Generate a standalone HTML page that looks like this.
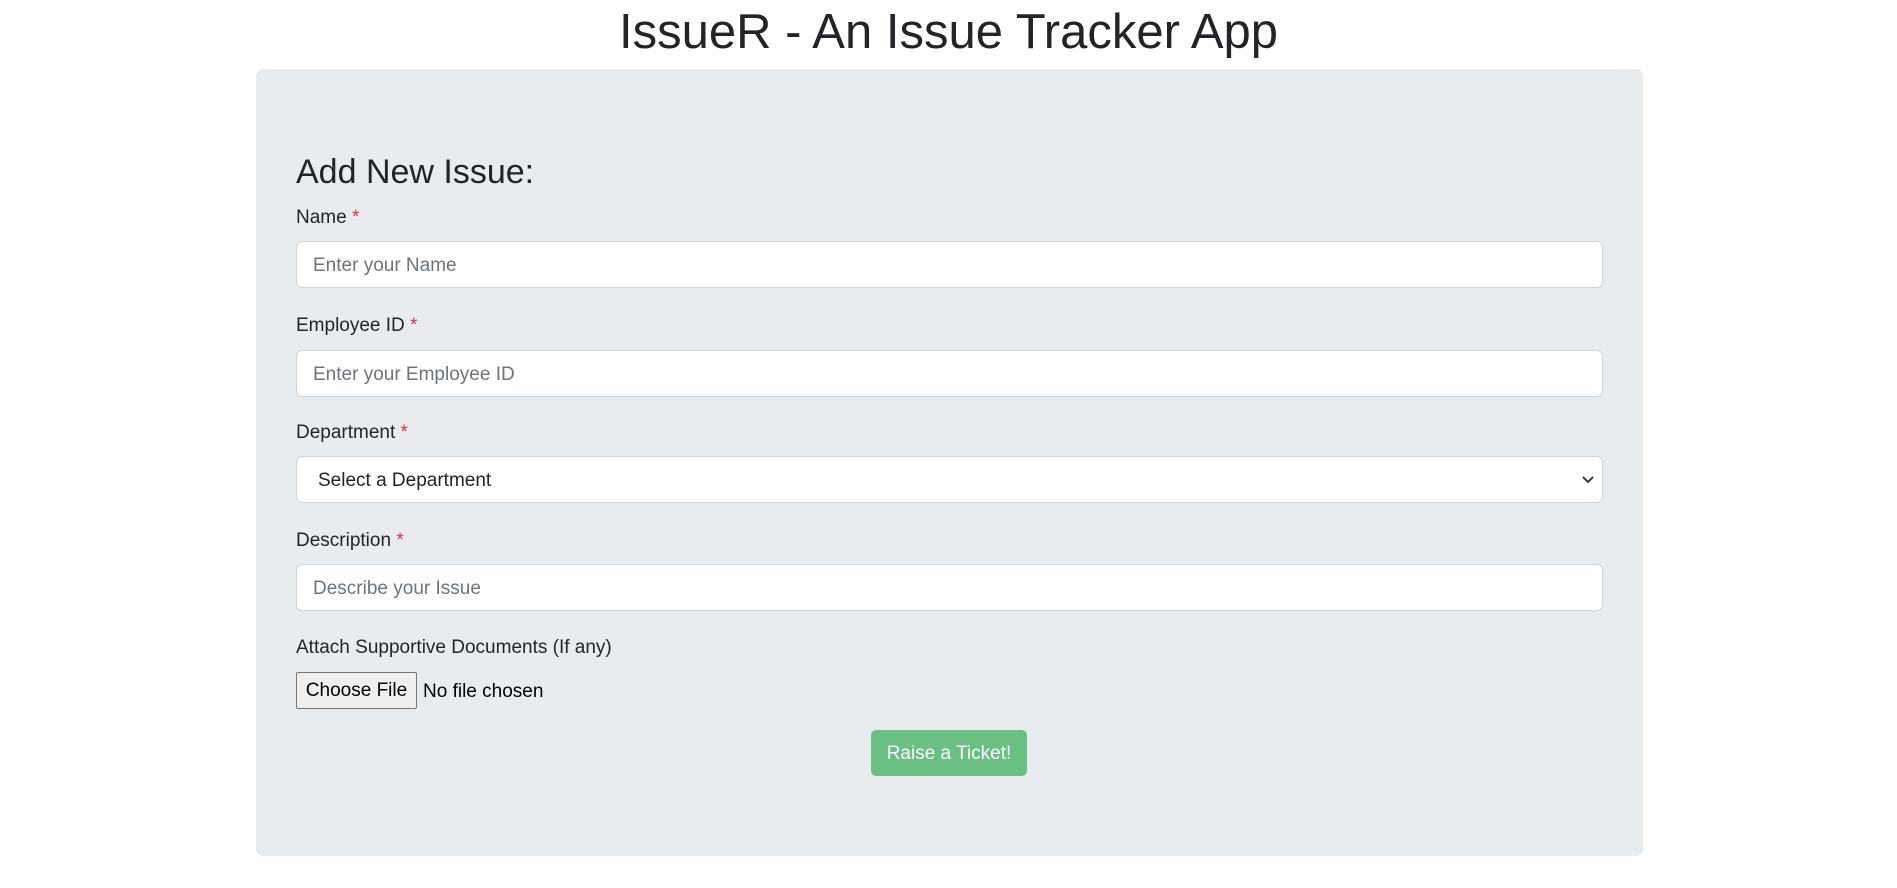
<!DOCTYPE html>
<html><head><meta charset="utf-8"><style>
*{box-sizing:border-box;margin:0;padding:0}
body{width:1897px;height:888px;background:#fff;font-family:"Liberation Sans",sans-serif;color:#212529;position:relative;overflow:hidden}
.a{position:absolute;white-space:nowrap}
h1{position:absolute;left:0;width:1897px;text-align:center;top:1px;font-size:49px;font-weight:500;line-height:62px}
.box{position:absolute;left:256px;top:69px;width:1387px;height:787px;background:#e9ecef;border-radius:7px}
.lbl{font-size:19px;line-height:24px}
.req{color:#dc3545}
.inp{position:absolute;left:296px;width:1307px;height:47px;background:#fff;border:1px solid #ced4da;border-radius:6px;font-size:19px;color:#6c757d;padding-left:16px;line-height:48px}
</style></head><body>
<h1>IssueR - An Issue Tracker App</h1>
<div class="box"></div>
<div class="a" style="left:296px;top:150px;font-size:34px;font-weight:500;line-height:44px">Add New Issue:</div>
<div class="a lbl" style="left:296px;top:206px">Name <span class="req">*</span></div>
<div class="inp" style="top:241px">Enter your Name</div>
<div class="a lbl" style="left:296px;top:314px">Employee ID <span class="req">*</span></div>
<div class="inp" style="top:350px">Enter your Employee ID</div>
<div class="a lbl" style="left:296px;top:421px">Department <span class="req">*</span></div>
<div class="inp" style="top:456px;color:#212529;padding-left:21px">Select a Department
<svg style="position:absolute;right:7px;top:17px" width="14" height="12" viewBox="0 0 14 12"><path d="M2 3l5 5 5-5" fill="none" stroke="#343a40" stroke-width="2"/></svg></div>
<div class="a lbl" style="left:296px;top:529px">Description <span class="req">*</span></div>
<div class="inp" style="top:564px">Describe your Issue</div>
<div class="a lbl" style="left:296px;top:636px">Attach Supportive Documents (If any)</div>
<div class="a" style="left:296px;top:672px;width:121px;height:37px;background:#efefef;border:1px solid #767676;border-radius:2px;font-size:19px;line-height:36px;text-align:center;color:#000">Choose File</div>
<div class="a" style="left:423px;top:673px;font-size:19px;line-height:37px;color:#000">No file chosen</div>
<div class="a" style="left:871px;top:730px;width:156px;height:46px;background:#6abf83;border-radius:5px;color:#fff;font-size:19px;line-height:48px;text-align:center">Raise a Ticket!</div>
</body></html>
